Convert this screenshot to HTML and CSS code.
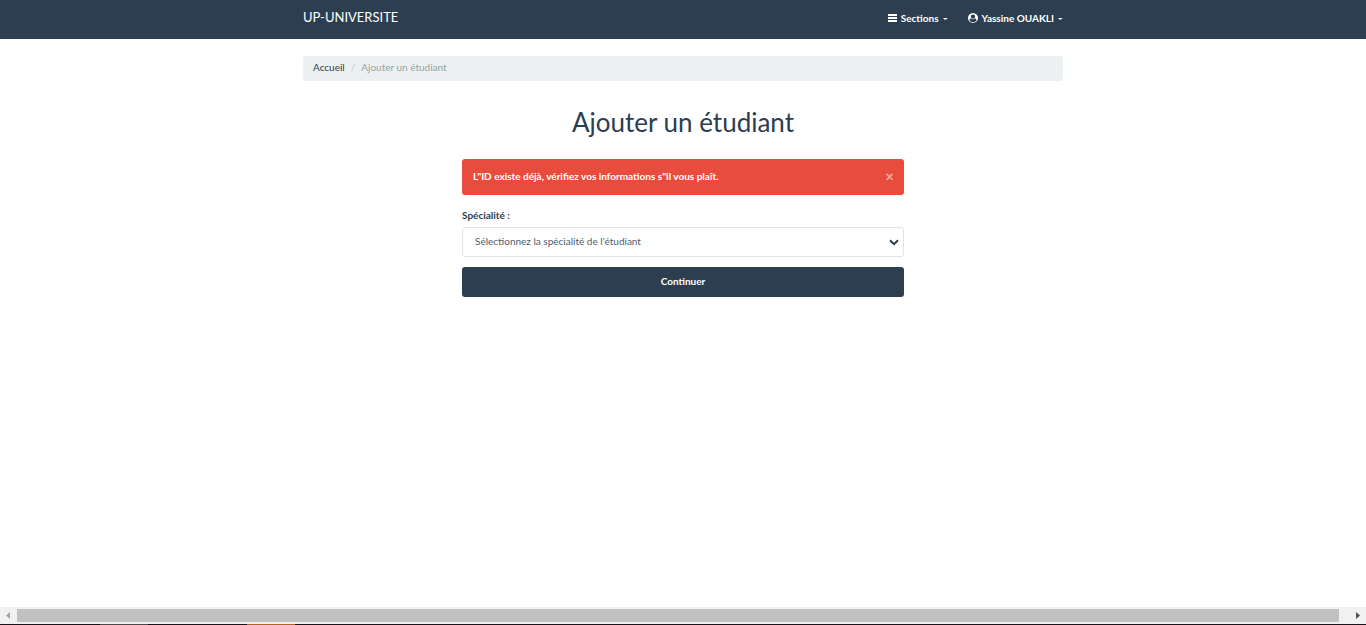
FILE: index.html
```
<!DOCTYPE html>
<html lang="fr">
<head>
<meta charset="utf-8">
<meta name="viewport" content="width=device-width, initial-scale=1">
<title>Ajouter un étudiant</title>
<link rel="stylesheet" href="styles.css">
</head>
<body>
<header class="navbar">
  <div class="container navbar-inner">
    <a class="brand" href="#">UP-UNIVERSITE</a>
    <nav class="menu">
      <button class="menu-item" type="button">
        <svg class="icon icon-bars" viewBox="0 0 9 10" aria-hidden="true"><path d="M0 1h9v2H0zM0 4h9v2H0zM0 7h9v2H0z"/></svg>
        <span>Sections</span><i class="caret"></i>
      </button>
      <button class="menu-item" type="button">
        <svg class="icon" viewBox="0 0 1792 1792" aria-hidden="true"><path d="M1523 1339q-22-155-87.500-257.500t-184.500-118.500q-67 74-159.500 115.500t-195.500 41.500-195.500-41.500-159.500-115.500q-119 16-184.500 118.500t-87.500 257.500q106 150 271 237.500t356 87.500 356-87.500 271-237.500zM1280 640q0-159-112.500-271.500t-271.500-112.500-271.500 112.500-112.500 271.500 112.500 271.500 271.500 112.500 271.500-112.500 112.500-271.500zM1792 896q0 182-71 347.500t-190.500 286-285.500 191.500-349 71q-182 0-348-71t-286-191-191-286-71-348 71-348 191-286 286-191 348-71 348 71 286 191 191 286 71 348z" fill-rule="evenodd"/></svg>
        <span>Yassine OUAKLI</span><i class="caret"></i>
      </button>
    </nav>
  </div>
</header>
<main class="container content">
  <ol class="breadcrumb">
    <li><a href="#">Accueil</a></li>
    <li class="current">Ajouter un étudiant</li>
  </ol>
  <h1 class="title">Ajouter un étudiant</h1>
  <form class="form">
    <div class="alert" role="alert">
      <strong>L"ID existe déjà, vérifiez vos informations s"il vous plaît.</strong>
      <button class="close" type="button" aria-label="Fermer">×</button>
    </div>
    <label class="label" for="specialite">Spécialité :</label>
    <div class="select-wrap">
      <select class="select" id="specialite"><option>Sélectionnez la spécialité de l'étudiant</option></select>
      <svg class="chevron" viewBox="0 0 10 7" aria-hidden="true"><path d="M1 1.200l4 4 4-4"/></svg>
    </div>
    <button class="submit" type="button">Continuer</button>
  </form>
</main>
<footer class="scrollbar" aria-hidden="true">
  <svg class="arrow" viewBox="0 0 17 17"><path d="M10 5v7L6 8.500z"/></svg>
  <div class="thumb"></div>
  <svg class="arrow-right" viewBox="0 0 27 17"><path d="M17 5v7l4-3.500z"/></svg>
</footer>
<div class="taskbar" aria-hidden="true"><span class="task task-idle"></span><span class="task task-active"></span></div>
</body>
</html>
```
FILE: styles.css
```
* { box-sizing: border-box; }

body {
  margin: 0;
  min-height: 100vh;
  display: flex;
  flex-direction: column;
  background: #fff;
  color: #2c3e50;
  font: 10px/14px Lato, "Liberation Sans", sans-serif;
}

button, select { font: inherit; }

.container {
  width: 100%;
  max-width: 780px;
  margin: 0 auto;
  padding: 0 10px;
}

.navbar {
  background: #2c3e50;
  color: #fff;
  padding-bottom: 3px;
}

.navbar-inner {
  display: flex;
  align-items: center;
  justify-content: space-between;
  min-height: 36px;
}

.brand {
  color: #fff;
  font-size: 13px;
  line-height: 34px;
  text-decoration: none;
  align-self: flex-start;
}

.menu { display: flex; gap: 20px; }

.menu-item {
  display: flex;
  align-items: center;
  gap: 4px;
  padding: 0;
  border: 0;
  background: none;
  color: #fff;
  font-weight: 700;
}

.icon { width: 10px; height: 10px; fill: #fff; }
.icon-bars { width: 9px; }

.caret {
  margin-top: 1px;
  border-top: 2px solid #fff;
  border-left: 2px solid transparent;
  border-right: 3px solid transparent;
}

.content { flex: 1; padding-top: 17px; }

.breadcrumb {
  display: flex;
  margin: 0;
  padding: 4px 10px 7px;
  list-style: none;
  background: #ecf0f1;
  border-radius: 3px;
}

.breadcrumb a { color: #2c3e50; text-decoration: none; }
.current { color: #95a5a6; }
.current::before { content: "/"; padding: 0 6px; color: #ccc; }

.title {
  margin: 26px 0 22px;
  font-size: 26px;
  line-height: 30px;
  font-weight: 400;
  text-align: center;
}

.form {
  display: flex;
  flex-direction: column;
  max-width: 442px;
  margin: 0 auto;
}

.alert {
  display: flex;
  align-items: center;
  justify-content: space-between;
  min-height: 36px;
  padding: 0 10px 2px 11px;
  background: #e74c3c;
  border-radius: 3px;
  color: #fff;
}

.close {
  padding: 0;
  border: 0;
  background: none;
  color: #f3a69e;
  font-size: 15px;
  font-weight: 900;
}

.label { margin: 13px 0 5px; font-weight: 700; }

.select-wrap { position: relative; }

.select {
  display: block;
  width: 100%;
  height: 30px;
  padding: 0 12px 2px;
  appearance: none;
  background: #fff;
  border: 1px solid #dce4ec;
  border-radius: 3px;
  color: #4d5d6c;
}

.chevron {
  position: absolute;
  right: 5px;
  top: 12px;
  width: 10px;
  height: 7px;
  fill: none;
  stroke: #2c3e50;
  stroke-width: 2;
  pointer-events: none;
}

.submit {
  height: 30px;
  margin-top: 10px;
  padding: 0 0 2px;
  border: 0;
  border-radius: 3px;
  background: #2c3e50;
  color: #fff;
  font-weight: 700;
}

.scrollbar { display: flex; align-items: center; background: #f1f1f1; height: 17px; }
.arrow { width: 17px; height: 17px; fill: #a3a3a3; }
.arrow-right { width: 27px; height: 17px; fill: #505050; }
.thumb { flex: 1; height: 13px; background: #c1c1c1; }

.taskbar { display: flex; height: 1px; background: #17151a; padding-left: 100px; gap: 99px; }
.task { width: 48px; }
.task-idle { background: #4a4849; }
.task-active { background: #b5621c; }
```
